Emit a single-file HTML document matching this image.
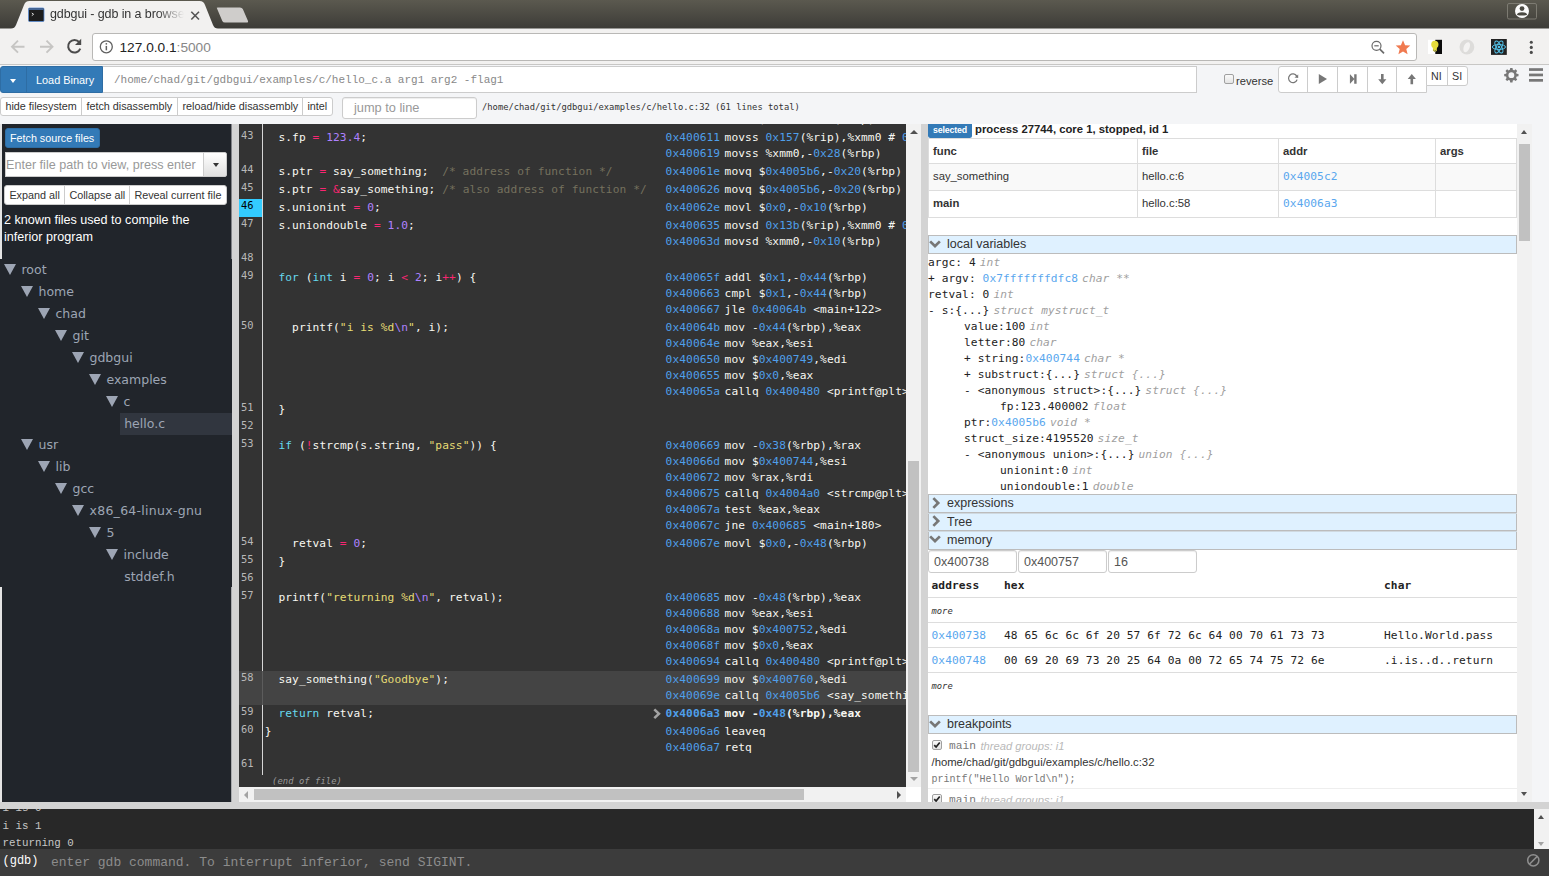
<!DOCTYPE html>
<html lang="en">
<head>
<meta charset="utf-8">
<title>gdbgui - gdb in a browser</title>
<style>
*{box-sizing:border-box;margin:0;padding:0}
html,body{width:1549px;height:876px;overflow:hidden;background:#efefef;font-family:"Liberation Sans",sans-serif;}
.abs{position:absolute}
#chrome-tabs{position:absolute;left:0;top:0;width:1549px;height:29px;background:linear-gradient(#5b594f,#3c3b37);}
#chrome-bar{position:absolute;left:0;top:29px;width:1549px;height:36px;background:#f2f1f0;border-bottom:1px solid #c8c7c5}
#omnibox{position:absolute;left:92px;top:4px;width:1325px;height:28px;background:#fff;border:1px solid #b9b8b6;border-radius:3px}
#url{position:absolute;left:26.5px;top:6px;font-size:13.7px;color:#222;font-family:"Liberation Sans",sans-serif;white-space:nowrap}
#url span{color:#888}
#tabtitle{position:absolute;left:50px;top:7px;width:134px;height:18px;overflow:hidden;white-space:nowrap;font-size:12.5px;color:#333;font-family:"Liberation Sans",sans-serif;letter-spacing:-0.1px;-webkit-mask-image:linear-gradient(90deg,#000 80%,transparent 100%);mask-image:linear-gradient(90deg,#000 80%,transparent 100%)}
#page{position:absolute;left:0;top:65px;width:1549px;height:811px;background:#f4f5f7;overflow:hidden}
.mono{font-family:"DejaVu Sans Mono",monospace}
.cmono{font-family:"Liberation Mono",monospace}
.btn{position:absolute;background:#fff;border:1px solid #ccc;color:#333;font-size:10.7px;white-space:nowrap;text-align:center}
#topbar{position:absolute;left:0;top:0;width:1549px;height:59px;background:#f4f5f7}
.bt{position:absolute;top:35px;margin-left:0.400px;font-size:10.800px;color:#333;white-space:nowrap}
/* sidebar */
#sidebar{position:absolute;left:0;top:59px;width:232px;height:678px;background:#21252b;overflow:hidden}
.tree{position:absolute;left:0.500px;top:1px;font-family:"DejaVu Sans",sans-serif;font-size:12.500px;color:#9da5b4;white-space:nowrap}
.tree div{position:absolute;height:22px;line-height:22px}
.tri{position:absolute;width:0;height:0;border-left:6px solid transparent;border-right:6px solid transparent;border-top:11px solid #9da5b4}
/* code */
#code{position:absolute;left:239px;top:59px;width:667px;height:663px;background:#333;overflow:hidden;color:#f8f8f2;font-family:"DejaVu Sans Mono",monospace;font-size:11.2px;letter-spacing:0.085px;white-space:pre}
#code .ln{position:absolute;left:0;width:24px;height:18px;font-size:10.400px;line-height:12px;color:#b8b8b8;padding-left:2px}
#code .lnb{color:#000}
#code .bp{position:absolute;left:0;width:23px;height:18px;background:#33ccff}
#code .hl{position:absolute;left:0;width:667px;background:#444}
#code .gut{position:absolute;left:23px;top:0;width:1px;height:651px;background:#d6d6d6}
#code .sl{position:absolute;left:25.800px;height:16px;line-height:16px}
#code .al{position:absolute;left:426.600px;height:16px;line-height:16px}
#code .ai{position:absolute;left:485.600px;height:16px;line-height:16px}
#code .b{font-weight:bold}
#code .a{color:#4f9fea}
#code .k{color:#66d9ef}
#code .n{color:#ae81ff}
#code .e{color:#ae81ff}
#code .o{color:#f92672}
#code .s{color:#e6db74}
#code .c{color:#75715e}
#code .eof{position:absolute;left:33px;font-size:8.800px;line-height:12px;font-style:italic;color:#999}
#right{position:absolute;left:928px;top:59px;width:604px;height:678px;background:#fff;overflow:hidden}
#right .tc{position:absolute;font-size:11.300px;line-height:13px;color:#333;white-space:nowrap}
#right .tb{font-weight:bold}
#right .tm{font-family:"DejaVu Sans Mono",monospace;font-size:11.200px;letter-spacing:0.085px;color:#5aa7ee;line-height:14px}
#right .hd{position:absolute;left:0;width:589px;background:#dff1ff;border:1px solid #bcbcbc}
#right .ht{position:absolute;left:19px;font-size:12.500px;line-height:15px;color:#333;white-space:nowrap}
#right .vl{position:absolute;font-family:"DejaVu Sans Mono",monospace;font-size:11.200px;letter-spacing:0.085px;line-height:16px;color:#222;white-space:pre}
#right .vl i{color:#a0a0a0;margin-left:4px}
#right .va{color:#5aa7ee}
#right .mi{position:absolute;width:89px;height:22.500px;background:#fff;border:1px solid #ccc;border-radius:3px;box-shadow:inset 0 1px 1px rgba(0,0,0,.075)}
#right .mt{position:absolute;font-size:12.500px;line-height:15px;color:#555}
#right .mr{position:absolute;font-family:"DejaVu Sans Mono",monospace;font-size:11.200px;letter-spacing:0.085px;line-height:16px;color:#222;white-space:pre}
#right .mo{position:absolute;font-family:"DejaVu Sans Mono",monospace;font-size:8.800px;font-style:italic;line-height:12px;color:#333}
#right .cb{position:absolute;width:10px;height:10px;border:1px solid #a0a0a0;border-radius:2px;background:linear-gradient(#fafafa,#e0e0e0)}
#console{position:absolute;left:0;top:743.500px;width:1549px;height:40.500px;background:#282828;overflow:hidden;font-family:"Liberation Mono",monospace;font-size:10.800px;color:#c6c6c6;white-space:pre}
#console div.l{position:absolute;left:2.500px;line-height:14px}
#gdbinput{position:absolute;left:0;top:784px;width:1549px;height:27px;background:#3c3c3c}
</style>
</head>
<body>
<div id="chrome-tabs">
<svg class="abs" style="left:0;top:0" width="1549" height="29" viewBox="0 0 1549 29">
<path d="M0 28.500 L11 28.500 C13.500 28.500 15 27.500 16 25 L24 5 C25 2.500 26.500 1 29.500 1 L199.500 1 C202.500 1 204 2.500 205 5 L213 25 C214 27.500 215.500 28.500 218 28.500 L1549 28.500 L1549 30 L0 30 Z" fill="#f2f1f0"/>
<path d="M217 8.500 Q216 7.500 218 7.500 L240 7.500 Q242 7.500 242.800 9 L248 21 Q248.600 22.500 247 22.500 L225 22.500 Q223 22.500 222.300 21 Z" fill="#cfcdcb"/>
<rect x="28.500" y="8" width="15.500" height="13.500" rx="1" fill="#1d1d1d" stroke="#5b8ed6" stroke-width="0.800"/>
<rect x="29" y="8.300" width="14.500" height="1.600" fill="#4a6fa5"/>
<path d="M31.800 13 L33.600 14.300 L31.800 15.600" stroke="#eee" stroke-width="0.900" fill="none"/>
<path d="M191.300 11.800 L199 19.500 M199 11.800 L191.300 19.500" stroke="#555" stroke-width="1.600" fill="none"/>
<rect x="1507.500" y="3.500" width="29" height="15.500" rx="1.500" fill="none" stroke="#7d7b72" stroke-width="1"/>
<circle cx="1522" cy="11" r="7" fill="#fbfbfb"/>
<circle cx="1522" cy="8.600" r="2.400" fill="#4b4a43"/>
<path d="M1517 14.900 Q1517 12.300 1522 12.300 Q1527 12.300 1527 14.900 Q1522 16.200 1517 14.900Z" fill="#4b4a43"/>
</svg>
<div id="tabtitle">gdbgui - gdb in a browser</div>
</div>
<div id="chrome-bar">
<svg class="abs" style="left:0;top:0" width="1549" height="36" viewBox="0 0 1549 36">
<g fill="none" stroke="#c6c5c3" stroke-width="1.900">
<path d="M24.500 17.700 L12 17.700 M18 11.700 L12 17.700 L18 23.700"/>
<path d="M40 17.700 L52.500 17.700 M46.500 11.700 L52.500 17.700 L46.500 23.700"/>
</g>
<path d="M79.300 13.200 A6.300 6.300 0 1 0 80.300 19.700" fill="none" stroke="#4b4b4b" stroke-width="2"/>
<path d="M81.200 9.800 L81.200 16 L75 16 Z" fill="#4b4b4b"/>
</svg>
<div id="omnibox"><div id="url">127.0.0.1<span>:5000</span></div>
<svg class="abs" style="left:0;top:1px" width="1323" height="25" viewBox="0 0 1323 25">
<circle cx="13.300" cy="11.800" r="6" fill="none" stroke="#5f5f5f" stroke-width="1.300"/>
<rect x="12.600" y="10.900" width="1.500" height="4.400" fill="#5f5f5f"/><rect x="12.600" y="8.100" width="1.500" height="1.500" fill="#5f5f5f"/>
<circle cx="1283.500" cy="10.800" r="4.500" fill="none" stroke="#6a6a6a" stroke-width="1.200"/>
<path d="M1286.800 14.100 L1291 18.300" stroke="#6a6a6a" stroke-width="1.700"/>
<path d="M1281.300 10.800 L1285.700 10.800" stroke="#6a6a6a" stroke-width="1.200"/>
<path d="M1310 5.300 L1312.100 10.200 L1317.300 10.600 L1313.300 14 L1314.600 19.200 L1310 16.400 L1305.400 19.200 L1306.700 14 L1302.700 10.600 L1307.900 10.200 Z" fill="#f07a50"/>
</svg>
</div>
<svg class="abs" style="left:1420px;top:0" width="129" height="36" viewBox="0 0 129 36">
<rect x="8" y="10.800" width="7.300" height="14.200" fill="#fff"/><rect x="15.300" y="10.800" width="6.700" height="14.200" fill="#0b0b0b"/>
<path d="M14.800 11.800 q3.700 0 3.700 4 q0 2 -1.600 3.300 l0 2.700 q-2 2 -4 0 l0 -2.700 q-1.700 -1.300 -1.700 -3.300 q0 -4 3.600 -4z" fill="#e6dc3c"/>
<path d="M13.300 21 q1.500 2.600 3 0" fill="none" stroke="#555" stroke-width="0.800"/>
<circle cx="46.900" cy="18" r="7.400" fill="#dddcda"/>
<ellipse cx="46.700" cy="18.200" rx="2.900" ry="5.300" fill="#f4f3f2" transform="rotate(22 46.700 18.200)"/>
<rect x="71" y="10" width="15.800" height="15.900" fill="#222"/>
<g fill="none" stroke="#53c1e8" stroke-width="1"><ellipse cx="78.900" cy="18" rx="6.600" ry="2.500"/><ellipse cx="78.900" cy="18" rx="6.600" ry="2.500" transform="rotate(60 78.900 18)"/><ellipse cx="78.900" cy="18" rx="6.600" ry="2.500" transform="rotate(120 78.900 18)"/></g>
<circle cx="78.900" cy="18" r="1.300" fill="#53c1e8"/>
<circle cx="111.300" cy="13.300" r="1.550" fill="#4b4b4b"/><circle cx="111.300" cy="18.400" r="1.550" fill="#4b4b4b"/><circle cx="111.300" cy="23.400" r="1.550" fill="#4b4b4b"/>
</svg>
</div>
<div id="page">
<div id="topbar">
<div class="abs" style="left:0;top:1px;width:103px;height:27px;background:#337ab7;border:1px solid #2e6da4;border-radius:3px 0 0 3px"></div>
<div class="abs" style="left:26px;top:1px;width:1px;height:27px;background:#2e6da4"></div>
<div class="abs" style="left:10px;top:14px;width:0;height:0;border-left:3.500px solid transparent;border-right:3.500px solid transparent;border-top:4px solid #fff"></div>
<div class="abs" style="left:36px;top:9px;font-size:10.900px;color:#fff;white-space:nowrap">Load Binary</div>
<div class="abs" style="left:103px;top:1px;width:1094px;height:27px;background:#fff;border:1px solid #ccc;border-left:none"></div>
<div class="abs cmono" style="left:114px;top:9px;font-size:11px;color:#888;white-space:nowrap">/home/chad/git/gdbgui/examples/c/hello_c.a arg1 arg2 -flag1</div>
<div class="abs" style="left:1224px;top:9px;width:10px;height:10px;border:1px solid #a0a0a0;border-radius:2px;background:linear-gradient(#fafafa,#e4e4e4)"></div>
<div class="abs" style="left:1236px;top:10px;font-size:11.200px;color:#333;white-space:nowrap">reverse</div>
<div class="abs" style="left:1278px;top:1px;width:149px;height:27px;background:#fff;border:1px solid #ccc;border-radius:3px 0 0 3px"></div>
<div class="abs" style="left:1307px;top:1px;width:1px;height:27px;background:#ccc"></div>
<div class="abs" style="left:1337px;top:1px;width:1px;height:27px;background:#ccc"></div>
<div class="abs" style="left:1367px;top:1px;width:1px;height:27px;background:#ccc"></div>
<div class="abs" style="left:1396px;top:1px;width:1px;height:27px;background:#ccc"></div>
<div class="abs" style="left:1426px;top:1px;width:42px;height:20px;background:#fff;border:1px solid #ccc;border-radius:0 3px 3px 0"></div>
<div class="abs" style="left:1447px;top:1px;width:1px;height:20px;background:#ccc"></div>
<div class="abs" style="left:1431px;top:5px;font-size:10.700px;color:#333">NI</div>
<div class="abs" style="left:1452px;top:5px;font-size:10.700px;color:#333">SI</div>
<svg class="abs" style="left:1278px;top:0" width="271" height="30" viewBox="0 0 271 30">
<g fill="#777" stroke="none">
<path d="M19.200 10.600 A5 5 0 1 0 19.700 14.800 L18.400 14.400 A3.700 3.700 0 1 1 18 11.300 L16.500 12.600 L20.200 12.900 L20.200 9.200 Z"/>
<path d="M40.800 9 L49 14 L40.800 19 Z"/>
<path transform="translate(4.700,0)" d="M71.500 9.300 L73.900 9.300 L73.900 18.700 L71.500 18.700 L71.500 14.300 L67.600 18.500 Q67.200 18.900 67.200 18.300 L67.200 9.700 Q67.200 9.100 67.600 9.500 L71.500 13.700 Z"/>
<path d="M103 9 L105.600 9 L105.600 14.200 L108.400 14.200 L104.300 19.200 L100.200 14.200 L103 14.200 Z"/>
<path d="M132.500 19.200 L135.100 19.200 L135.100 14 L137.900 14 L133.800 9 L129.700 14 L132.500 14 Z"/>
<g transform="translate(225.300,2.500)"><path d="M15.200 6.500 L15.200 8.800 L13.300 9.100 Q13.100 9.800 12.800 10.400 L13.900 11.900 L12.300 13.500 L10.800 12.400 Q10.200 12.800 9.500 13 L9.200 14.900 L6.900 14.900 L6.600 13 Q5.900 12.800 5.300 12.400 L3.800 13.500 L2.200 11.900 L3.300 10.400 Q2.900 9.800 2.800 9.100 L0.900 8.800 L0.900 6.500 L2.800 6.200 Q3 5.500 3.300 4.900 L2.200 3.400 L3.800 1.800 L5.300 2.900 Q5.900 2.500 6.600 2.300 L6.900 0.400 L9.200 0.400 L9.500 2.300 Q10.200 2.500 10.800 2.900 L12.300 1.800 L13.900 3.400 L12.800 4.900 Q13.100 5.500 13.300 6.200 Z M8.050 4.700 A2.950 2.950 0 1 0 8.050 10.600 A2.950 2.950 0 1 0 8.050 4.700 Z" fill-rule="evenodd"/></g>
<rect x="251" y="3.200" width="14" height="2.700"/><rect x="251" y="8.600" width="14" height="2.700"/><rect x="251" y="14" width="14" height="2.700"/>
</g>
</svg>
<div class="btn" style="left:0;top:32px;width:82px;height:19px;border-radius:3px 0 0 3px"></div>
<div class="btn" style="left:81px;top:32px;width:97px;height:19px"></div>
<div class="btn" style="left:177px;top:32px;width:126px;height:19px"></div>
<div class="btn" style="left:302px;top:32px;width:31px;height:19px;border-radius:0 3px 3px 0"></div>
<div class="bt" style="left:5px">hide filesystem</div>
<div class="bt" style="left:86px">fetch disassembly</div>
<div class="bt" style="left:182px">reload/hide disassembly</div>
<div class="bt" style="left:307px">intel</div>
<div class="abs" style="left:342px;top:32px;width:135px;height:22px;background:#fff;border:1px solid #ccc;border-radius:3px;box-shadow:inset 0 1px 1px rgba(0,0,0,.075)"></div>
<div class="abs" style="left:354px;top:35px;font-size:12.800px;color:#999;white-space:nowrap">jump to line</div>
<div class="abs mono" style="left:482px;top:37px;font-size:8.800px;color:#333;white-space:nowrap">/home/chad/git/gdbgui/examples/c/hello.c:32 (61 lines total)</div>
</div>
<div id="sidebar">
<div class="abs" style="left:0;top:0;width:1.500px;height:135px;background:#e4e4e4"></div>
<div class="abs" style="left:231px;top:0;width:1px;height:135px;background:#808287"></div>
<div class="abs" style="left:0;top:463px;width:1.500px;height:215px;background:#e4e4e4"></div>
<div class="abs" style="left:231px;top:463px;width:1px;height:215px;background:#a8aaad"></div>
<div class="abs" style="left:5px;top:4px;width:95px;height:20px;background:#337ab7;border:1px solid #2e6da4;border-radius:3px"></div>
<div class="abs" style="left:10px;top:8px;font-size:10.750px;color:#fff;white-space:nowrap">Fetch source files</div>
<div class="abs" style="left:5px;top:28px;width:199px;height:25px;background:#fff;border:1px solid #ccc"></div>
<div class="abs" style="left:6px;top:34px;font-size:12.600px;color:#999;white-space:nowrap">Enter file path to view, press enter</div>
<div class="abs" style="left:203px;top:28px;width:24px;height:25px;background:linear-gradient(#fff,#e0e0e0);border:1px solid #ccc;border-radius:0 2px 2px 0"></div>
<div class="abs" style="left:212.500px;top:39px;width:0;height:0;border-left:3.800px solid transparent;border-right:3.800px solid transparent;border-top:4px solid #333"></div>
<div class="abs" style="left:4px;top:61px;width:223px;height:20px;background:#fff;border:1px solid #ccc;border-radius:3px"></div>
<div class="abs" style="left:64px;top:61px;width:1px;height:20px;background:#ccc"></div>
<div class="abs" style="left:129px;top:61px;width:1px;height:20px;background:#ccc"></div>
<div class="bt" style="left:9px;top:65px">Expand all</div>
<div class="bt" style="left:69px;top:65px">Collapse all</div>
<div class="bt" style="left:134px;top:65px">Reveal current file</div>
<div class="abs" style="left:4px;top:88px;font-size:12.600px;line-height:17px;color:#fff;white-space:nowrap">2 known files used to compile the<br>inferior program</div>
<div class="tree">
<div class="tri" style="left:3.1px;top:139.0px"></div><div style="left:21px;top:134.0px">root</div>
<div class="tri" style="left:20.1px;top:160.9px"></div><div style="left:38px;top:155.9px">home</div>
<div class="tri" style="left:37.1px;top:182.9px"></div><div style="left:55px;top:177.9px">chad</div>
<div class="tri" style="left:54.1px;top:204.8px"></div><div style="left:72px;top:199.8px">git</div>
<div class="tri" style="left:71.1px;top:226.7px"></div><div style="left:89px;top:221.7px">gdbgui</div>
<div class="tri" style="left:88.1px;top:248.7px"></div><div style="left:106px;top:243.7px">examples</div>
<div class="tri" style="left:105.1px;top:270.6px"></div><div style="left:123px;top:265.6px">c</div>
<div style="left:119.7px;top:287.5px;width:200px;background:#31363f"></div><div style="left:123.7px;top:287.5px">hello.c</div>
<div class="tri" style="left:20.1px;top:314.4px"></div><div style="left:38px;top:309.4px">usr</div>
<div class="tri" style="left:37.1px;top:336.4px"></div><div style="left:55px;top:331.4px">lib</div>
<div class="tri" style="left:54.1px;top:358.3px"></div><div style="left:72px;top:353.3px">gcc</div>
<div class="tri" style="left:71.1px;top:380.2px"></div><div style="left:89px;top:375.2px"><span style="letter-spacing:0.270px">x86_64-linux-gnu</span></div>
<div class="tri" style="left:88.1px;top:402.2px"></div><div style="left:106px;top:397.2px">5</div>
<div class="tri" style="left:105.1px;top:424.1px"></div><div style="left:123px;top:419.1px">include</div>
<div style="left:123.7px;top:441.0px">stddef.h</div>
</div>
</div>
<div class="abs" style="left:232px;top:59px;width:7px;height:678px;background:#d3d3d3"></div>
<div id="code">
<div class="gut"></div>
<div class="al" style="top:-12px"><span class="a">0x40060a</span></div><div class="ai" style="top:-12px">movl $<span class="a">0x64</span>,-<span class="a">0x40</span>(%rbp)</div>
<div class="ln" style="top:5px">43</div>
<div class="sl" style="top:6px">  s.fp <span class="o">=</span> <span class="n">123.4</span>;</div>
<div class="al" style="top:6px"><span class="a">0x400611</span></div><div class="ai" style="top:6px">movss <span class="a">0x157</span>(%rip),%xmm0 # <span class="a">0x400770</span></div>
<div class="al" style="top:22px"><span class="a">0x400619</span></div><div class="ai" style="top:22px">movss %xmm0,-<span class="a">0x28</span>(%rbp)</div>
<div class="ln" style="top:39px">44</div>
<div class="sl" style="top:40px">  s.ptr <span class="o">=</span> say_something;  <span class="c">/* address of function */</span></div>
<div class="al" style="top:40px"><span class="a">0x40061e</span></div><div class="ai" style="top:40px">movq $<span class="a">0x4005b6</span>,-<span class="a">0x20</span>(%rbp)</div>
<div class="ln" style="top:57px">45</div>
<div class="sl" style="top:58px">  s.ptr <span class="o">=</span> <span class="o">&amp;</span>say_something; <span class="c">/* also address of function */</span></div>
<div class="al" style="top:58px"><span class="a">0x400626</span></div><div class="ai" style="top:58px">movq $<span class="a">0x4005b6</span>,-<span class="a">0x20</span>(%rbp)</div>
<div class="bp" style="top:75px"></div>
<div class="ln lnb" style="top:75px">46</div>
<div class="sl" style="top:76px">  s.unionint <span class="o">=</span> <span class="n">0</span>;</div>
<div class="al" style="top:76px"><span class="a">0x40062e</span></div><div class="ai" style="top:76px">movl $<span class="a">0x0</span>,-<span class="a">0x10</span>(%rbp)</div>
<div class="ln" style="top:93px">47</div>
<div class="sl" style="top:94px">  s.uniondouble <span class="o">=</span> <span class="n">1.0</span>;</div>
<div class="al" style="top:94px"><span class="a">0x400635</span></div><div class="ai" style="top:94px">movsd <span class="a">0x13b</span>(%rip),%xmm0 # <span class="a">0x400778</span></div>
<div class="al" style="top:110px"><span class="a">0x40063d</span></div><div class="ai" style="top:110px">movsd %xmm0,-<span class="a">0x10</span>(%rbp)</div>
<div class="ln" style="top:127px">48</div>
<div class="ln" style="top:145px">49</div>
<div class="sl" style="top:146px">  <span class="k">for</span> (<span class="k">int</span> i <span class="o">=</span> <span class="n">0</span>; i <span class="o">&lt;</span> <span class="n">2</span>; i<span class="o">++</span>) {</div>
<div class="al" style="top:146px"><span class="a">0x40065f</span></div><div class="ai" style="top:146px">addl $<span class="a">0x1</span>,-<span class="a">0x44</span>(%rbp)</div>
<div class="al" style="top:162px"><span class="a">0x400663</span></div><div class="ai" style="top:162px">cmpl $<span class="a">0x1</span>,-<span class="a">0x44</span>(%rbp)</div>
<div class="al" style="top:178px"><span class="a">0x400667</span></div><div class="ai" style="top:178px">jle <span class="a">0x40064b</span> &lt;main+122&gt;</div>
<div class="ln" style="top:195px">50</div>
<div class="sl" style="top:196px">    printf(<span class="s">"i is %d</span><span class="e">\n</span><span class="s">"</span>, i);</div>
<div class="al" style="top:196px"><span class="a">0x40064b</span></div><div class="ai" style="top:196px">mov -<span class="a">0x44</span>(%rbp),%eax</div>
<div class="al" style="top:212px"><span class="a">0x40064e</span></div><div class="ai" style="top:212px">mov %eax,%esi</div>
<div class="al" style="top:228px"><span class="a">0x400650</span></div><div class="ai" style="top:228px">mov $<span class="a">0x400749</span>,%edi</div>
<div class="al" style="top:244px"><span class="a">0x400655</span></div><div class="ai" style="top:244px">mov $<span class="a">0x0</span>,%eax</div>
<div class="al" style="top:260px"><span class="a">0x40065a</span></div><div class="ai" style="top:260px">callq <span class="a">0x400480</span> &lt;printf@plt&gt;</div>
<div class="ln" style="top:277px">51</div>
<div class="sl" style="top:278px">  }</div>
<div class="ln" style="top:295px">52</div>
<div class="ln" style="top:313px">53</div>
<div class="sl" style="top:314px">  <span class="k">if</span> (<span class="o">!</span>strcmp(s.string, <span class="s">"pass"</span>)) {</div>
<div class="al" style="top:314px"><span class="a">0x400669</span></div><div class="ai" style="top:314px">mov -<span class="a">0x38</span>(%rbp),%rax</div>
<div class="al" style="top:330px"><span class="a">0x40066d</span></div><div class="ai" style="top:330px">mov $<span class="a">0x400744</span>,%esi</div>
<div class="al" style="top:346px"><span class="a">0x400672</span></div><div class="ai" style="top:346px">mov %rax,%rdi</div>
<div class="al" style="top:362px"><span class="a">0x400675</span></div><div class="ai" style="top:362px">callq <span class="a">0x4004a0</span> &lt;strcmp@plt&gt;</div>
<div class="al" style="top:378px"><span class="a">0x40067a</span></div><div class="ai" style="top:378px">test %eax,%eax</div>
<div class="al" style="top:394px"><span class="a">0x40067c</span></div><div class="ai" style="top:394px">jne <span class="a">0x400685</span> &lt;main+180&gt;</div>
<div class="ln" style="top:411px">54</div>
<div class="sl" style="top:412px">    retval <span class="o">=</span> <span class="n">0</span>;</div>
<div class="al" style="top:412px"><span class="a">0x40067e</span></div><div class="ai" style="top:412px">movl $<span class="a">0x0</span>,-<span class="a">0x48</span>(%rbp)</div>
<div class="ln" style="top:429px">55</div>
<div class="sl" style="top:430px">  }</div>
<div class="ln" style="top:447px">56</div>
<div class="ln" style="top:465px">57</div>
<div class="sl" style="top:466px">  printf(<span class="s">"returning %d</span><span class="e">\n</span><span class="s">"</span>, retval);</div>
<div class="al" style="top:466px"><span class="a">0x400685</span></div><div class="ai" style="top:466px">mov -<span class="a">0x48</span>(%rbp),%eax</div>
<div class="al" style="top:482px"><span class="a">0x400688</span></div><div class="ai" style="top:482px">mov %eax,%esi</div>
<div class="al" style="top:498px"><span class="a">0x40068a</span></div><div class="ai" style="top:498px">mov $<span class="a">0x400752</span>,%edi</div>
<div class="al" style="top:514px"><span class="a">0x40068f</span></div><div class="ai" style="top:514px">mov $<span class="a">0x0</span>,%eax</div>
<div class="al" style="top:530px"><span class="a">0x400694</span></div><div class="ai" style="top:530px">callq <span class="a">0x400480</span> &lt;printf@plt&gt;</div>
<div class="hl" style="top:547px;height:34px"></div><div class="abs" style="left:23px;top:547px;width:1px;height:34px;background:#5c5c5c"></div>
<div class="ln" style="top:547px">58</div>
<div class="sl" style="top:548px">  say_something(<span class="s">"Goodbye"</span>);</div>
<div class="al" style="top:548px"><span class="a">0x400699</span></div><div class="ai" style="top:548px">mov $<span class="a">0x400760</span>,%edi</div>
<div class="al" style="top:564px"><span class="a">0x40069e</span></div><div class="ai" style="top:564px">callq <span class="a">0x4005b6</span> &lt;say_something&gt;</div>
<div class="ln" style="top:581px">59</div>
<div class="sl" style="top:582px">  <span class="k">return</span> retval;</div>
<div class="al b" style="top:582px"><span class="a">0x4006a3</span></div><div class="ai b" style="top:582px">mov -<span class="a">0x48</span>(%rbp),%eax</div>
<svg class="abs" style="left:413.500px;top:583.500px" width="9" height="12" viewBox="0 0 9 12"><path d="M2.200 0.500 L7.800 5.800 L2.200 11.100 L0.400 9.300 L4.100 5.800 L0.400 2.300 Z" fill="#a2a2a2"/></svg>
<div class="ln" style="top:599px">60</div>
<div class="sl" style="top:600px">}</div>
<div class="al" style="top:600px"><span class="a">0x4006a6</span></div><div class="ai" style="top:600px">leaveq</div>
<div class="al" style="top:616px"><span class="a">0x4006a7</span></div><div class="ai" style="top:616px">retq</div>
<div class="ln" style="top:633px">61</div>
<div class="eof" style="top:651px">(end of file)</div>
</div>
<div class="abs" style="left:906px;top:59px;width:15px;height:663px;background:#f1f1f1"></div>
<div class="abs" style="left:908px;top:396px;width:11px;height:311px;background:#c1c1c1"></div>
<div class="abs" style="left:909.600px;top:64.500px;width:0;height:0;border-left:4px solid transparent;border-right:4px solid transparent;border-bottom:4.500px solid #505050"></div>
<div class="abs" style="left:909.500px;top:712px;width:0;height:0;border-left:4px solid transparent;border-right:4px solid transparent;border-top:4.500px solid #a3a3a3"></div>
<div class="abs" style="left:239px;top:722px;width:667px;height:15px;background:#f1f1f1"></div>
<div class="abs" style="left:906px;top:722px;width:15px;height:15px;background:#fff"></div>
<div class="abs" style="left:254px;top:724px;width:550px;height:11px;background:#c1c1c1"></div>
<div class="abs" style="left:244px;top:725.500px;width:0;height:0;border-top:4px solid transparent;border-bottom:4px solid transparent;border-right:4.500px solid #a3a3a3"></div>
<div class="abs" style="left:896.500px;top:725.500px;width:0;height:0;border-top:4px solid transparent;border-bottom:4px solid transparent;border-left:4.500px solid #505050"></div>
<div class="abs" style="left:921px;top:59px;width:7px;height:678px;background:#d3d3d3"></div>
<div class="abs" style="left:0;top:737px;width:1549px;height:7px;background:#d3d3d3"></div>
<div id="right">
<div class="abs" style="left:0;top:-3px;width:44px;height:17px;background:#337ab7;border-radius:2.500px"></div>
<div class="abs" style="left:5px;top:1px;font-size:8.800px;font-weight:bold;color:#fff;letter-spacing:-0.150px;line-height:10px">selected</div>
<div class="abs" style="left:47px;top:-2px;font-size:11.300px;font-weight:bold;color:#222;line-height:14px;white-space:nowrap">process 27744, core 1, stopped, id 1</div>
<div class="abs" style="left:0;top:14px;width:589px;height:80px;border:1px solid #ddd;background:#fff"></div>
<div class="abs" style="left:1px;top:39px;width:587px;height:27px;background:#f9f9f9"></div>
<div class="abs" style="left:0;top:39px;width:589px;height:1px;background:#ddd"></div>
<div class="abs" style="left:0;top:66px;width:589px;height:1px;background:#ddd"></div>
<div class="abs" style="left:209px;top:14px;width:1px;height:80px;background:#ddd"></div>
<div class="abs" style="left:350px;top:14px;width:1px;height:80px;background:#ddd"></div>
<div class="abs" style="left:507px;top:14px;width:1px;height:80px;background:#ddd"></div>
<div class="tc tb" style="left:5px;top:21px">func</div>
<div class="tc tb" style="left:214px;top:21px">file</div>
<div class="tc tb" style="left:355px;top:21px">addr</div>
<div class="tc tb" style="left:512px;top:21px">args</div>
<div class="tc " style="left:5px;top:46px">say_something</div>
<div class="tc " style="left:214px;top:46px">hello.c:6</div>
<div class="tc tm" style="left:355px;top:46px">0x4005c2</div>
<div class="tc tb" style="left:5px;top:73px">main</div>
<div class="tc " style="left:214px;top:73px">hello.c:58</div>
<div class="tc tm" style="left:355px;top:73px">0x4006a3</div>
<div class="hd" style="top:111px;height:19px"></div>
<svg class="abs" style="left:1px;top:116.0px" width="12" height="9" viewBox="0 0 12 9"><path d="M0.200 2.300 L2.100 0.400 L6 4.300 L9.900 0.400 L11.800 2.300 L6 8.100 Z" fill="#777"/></svg>
<div class="ht" style="top:113.0px">local variables</div>
<div class="vl" style="left:0px;top:131px">argc: 4<i>int</i></div>
<div class="vl" style="left:0px;top:147px">+ argv: <span class="va">0x7fffffffdfc8</span><i>char **</i></div>
<div class="vl" style="left:0px;top:163px">retval: 0<i>int</i></div>
<div class="vl" style="left:0px;top:179px">- s:{...}<i>struct mystruct_t</i></div>
<div class="vl" style="left:36px;top:195px">value:100<i>int</i></div>
<div class="vl" style="left:36px;top:211px">letter:80<i>char</i></div>
<div class="vl" style="left:36px;top:227px">+ string:<span class="va">0x400744</span><i>char *</i></div>
<div class="vl" style="left:36px;top:243px">+ substruct:{...}<i>struct {...}</i></div>
<div class="vl" style="left:36px;top:259px">- &lt;anonymous struct&gt;:{...}<i>struct {...}</i></div>
<div class="vl" style="left:72px;top:275px">fp:123.400002<i>float</i></div>
<div class="vl" style="left:36px;top:291px">ptr:<span class="va">0x4005b6</span><i>void *</i></div>
<div class="vl" style="left:36px;top:307px">struct_size:4195520<i>size_t</i></div>
<div class="vl" style="left:36px;top:323px">- &lt;anonymous union&gt;:{...}<i>union {...}</i></div>
<div class="vl" style="left:72px;top:339px">unionint:0<i>int</i></div>
<div class="vl" style="left:72px;top:355px">uniondouble:1<i>double</i></div>
<div class="hd" style="top:370px;height:19px"></div>
<svg class="abs" style="left:4px;top:373.2px" width="9" height="12" viewBox="0 0 9 12"><path d="M2.300 0.200 L0.400 2.100 L4.300 6 L0.400 9.900 L2.300 11.800 L8.100 6 Z" fill="#777"/></svg>
<div class="ht" style="top:372.0px">expressions</div>
<div class="hd" style="top:388px;height:19px"></div>
<svg class="abs" style="left:4px;top:391.2px" width="9" height="12" viewBox="0 0 9 12"><path d="M2.300 0.200 L0.400 2.100 L4.300 6 L0.400 9.900 L2.300 11.800 L8.100 6 Z" fill="#777"/></svg>
<div class="ht" style="top:390.7px">Tree</div>
<div class="abs" style="left:0;top:389px;width:589px;height:1px;background:#cfd9e0"></div>
<div class="hd" style="top:406px;height:20px"></div>
<svg class="abs" style="left:1px;top:411.0px" width="12" height="9" viewBox="0 0 12 9"><path d="M0.200 2.300 L2.100 0.400 L6 4.300 L9.900 0.400 L11.800 2.300 L6 8.100 Z" fill="#777"/></svg>
<div class="ht" style="top:409.0px">memory</div>
<div class="abs" style="left:0;top:407px;width:589px;height:1px;background:#cfd9e0"></div>
<div class="mi" style="left:0px;top:426px"></div><div class="mt" style="left:6px;top:431px">0x400738</div>
<div class="mi" style="left:90px;top:426px"></div><div class="mt" style="left:96px;top:431px">0x400757</div>
<div class="mi" style="left:180px;top:426px"></div><div class="mt" style="left:186px;top:431px">16</div>
<div class="mr tb" style="left:3.500px;top:454px">address</div>
<div class="mr tb" style="left:76px;top:454px">hex</div>
<div class="mr tb" style="left:456px;top:454px">char</div>
<div class="abs" style="left:0;top:473px;width:589px;height:1px;background:#ddd"></div>
<div class="abs" style="left:0;top:498px;width:589px;height:1px;background:#ddd"></div>
<div class="abs" style="left:0;top:523px;width:589px;height:1px;background:#ddd"></div>
<div class="abs" style="left:0;top:548px;width:589px;height:1px;background:#ddd"></div>
<div class="mo" style="left:3.500px;top:481px">more</div>
<div class="mr " style="left:3.500px;top:504px"><span class="va">0x400738</span></div>
<div class="mr " style="left:76px;top:504px">48 65 6c 6c 6f 20 57 6f 72 6c 64 00 70 61 73 73</div>
<div class="mr " style="left:456px;top:504px">Hello.World.pass</div>
<div class="mr " style="left:3.500px;top:529px"><span class="va">0x400748</span></div>
<div class="mr " style="left:76px;top:529px">00 69 20 69 73 20 25 64 0a 00 72 65 74 75 72 6e</div>
<div class="mr " style="left:456px;top:529px">.i.is..d..return</div>
<div class="mo" style="left:3.500px;top:556px">more</div>
<div class="hd" style="top:591px;height:19px"></div>
<svg class="abs" style="left:1px;top:596.0px" width="12" height="9" viewBox="0 0 12 9"><path d="M0.200 2.300 L2.100 0.400 L6 4.300 L9.900 0.400 L11.800 2.300 L6 8.100 Z" fill="#777"/></svg>
<div class="ht" style="top:593.0px">breakpoints</div>
<div class="cb" style="left:4px;top:615.5px"><svg width="8" height="8" viewBox="0 0 9 9" style="display:block"><path d="M1.400 4.600 L3.500 6.800 L7.600 1.600" stroke="#222" stroke-width="1.900" fill="none"/></svg></div>
<div class="abs cmono" style="left:21px;top:616px;font-size:11.200px;color:#777;line-height:12px">main</div>
<div class="abs" style="left:52.500px;top:616px;font-size:11.200px;font-style:italic;color:#b9b9b9;line-height:12px;white-space:nowrap">thread groups: i1</div>
<div class="abs" style="left:3.500px;top:631px;font-size:11.300px;color:#333;line-height:14px;white-space:nowrap">/home/chad/git/gdbgui/examples/c/hello.c:32</div>
<div class="abs cmono" style="left:3.500px;top:649.500px;font-size:10px;color:#777;line-height:12px;white-space:pre">printf("Hello World\n");</div>
<div class="abs" style="left:0;top:664px;width:589px;height:1px;background:#eee"></div>
<div class="cb" style="left:4px;top:669.5px"><svg width="8" height="8" viewBox="0 0 9 9" style="display:block"><path d="M1.400 4.600 L3.500 6.800 L7.600 1.600" stroke="#222" stroke-width="1.900" fill="none"/></svg></div>
<div class="abs cmono" style="left:21px;top:670px;font-size:11.200px;color:#777;line-height:12px">main</div>
<div class="abs" style="left:52.500px;top:670px;font-size:11.200px;font-style:italic;color:#b9b9b9;line-height:12px;white-space:nowrap">thread groups: i1</div>
<div class="abs" style="left:589px;top:0;width:15px;height:678px;background:#f1f1f1"></div>
<div class="abs" style="left:591px;top:19.500px;width:11px;height:97px;background:#c1c1c1"></div>
<div class="abs" style="left:593px;top:5.500px;width:0;height:0;border-left:3.500px solid transparent;border-right:3.500px solid transparent;border-bottom:4px solid #505050"></div>
<div class="abs" style="left:593px;top:668px;width:0;height:0;border-left:3.500px solid transparent;border-right:3.500px solid transparent;border-top:4px solid #505050"></div>
</div>
<div id="console">
<div class="l" style="top:-7.500px">i is 0</div>
<div class="l" style="top:10px">i is 1</div>
<div class="l" style="top:27px">returning 0</div>
<div class="abs" style="left:1534px;top:0;width:15px;height:41px;background:#f1f1f1"></div>
<div class="abs" style="left:1538px;top:6.500px;width:0;height:0;border-left:3.500px solid transparent;border-right:3.500px solid transparent;border-bottom:4px solid #505050"></div>
<div class="abs" style="left:1538px;top:33.500px;width:0;height:0;border-left:3.500px solid transparent;border-right:3.500px solid transparent;border-top:4px solid #a3a3a3"></div>
</div>
<div id="gdbinput">
<div class="abs cmono" style="left:2.500px;top:5px;font-size:12px;line-height:14px;color:#fff">(gdb)</div>
<div class="abs cmono" style="left:51px;top:5.500px;font-size:13px;line-height:15px;color:#8c8c8c;white-space:pre">enter gdb command. To interrupt inferior, send SIGINT.</div>
<svg class="abs" style="left:1526px;top:3.500px" width="15" height="15" viewBox="0 0 15 15"><circle cx="7.300" cy="7.300" r="5.600" fill="none" stroke="#8f8f8f" stroke-width="1.500"/><path d="M3.400 11.200 L11.200 3.400" stroke="#8f8f8f" stroke-width="1.500"/></svg>
</div>
</div>
</body>
</html>
